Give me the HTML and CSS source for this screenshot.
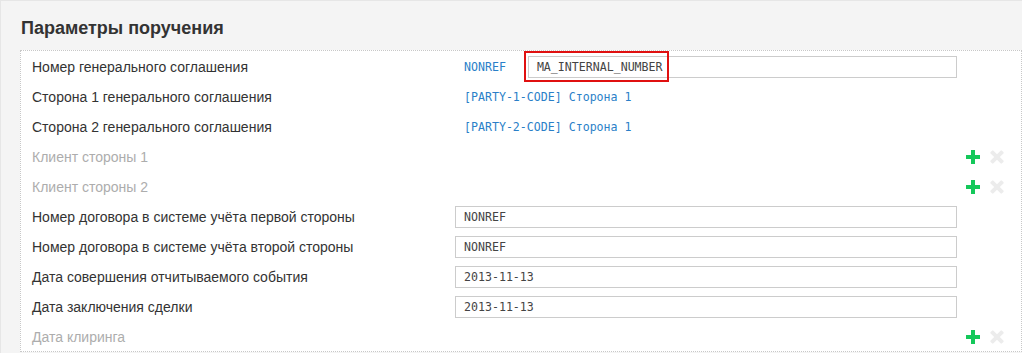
FILE: index.html
```html
<!DOCTYPE html>
<html>
<head>
<meta charset="utf-8">
<link rel="stylesheet" href="styles.css">
</head>
<body>
<div class="panel">
  <h2 class="title">Параметры поручения</h2>
  <div class="box">
    <div class="row">
      <div class="label">Номер генерального соглашения</div>
      <div class="value">
        <span class="code">NONREF</span>
        <span class="field field-wide highlight"><span class="field-text">MA_INTERNAL_NUMBER</span></span>
      </div>
      <div class="actions"></div>
    </div>
    <div class="row">
      <div class="label">Сторона 1 генерального соглашения</div>
      <div class="value"><span class="code">[PARTY-1-CODE] Сторона 1</span></div>
      <div class="actions"></div>
    </div>
    <div class="row">
      <div class="label">Сторона 2 генерального соглашения</div>
      <div class="value"><span class="code">[PARTY-2-CODE] Сторона 1</span></div>
      <div class="actions"></div>
    </div>
    <div class="row">
      <div class="label muted">Клиент стороны 1</div>
      <div class="value"></div>
      <div class="actions"><span class="plus"></span><span class="cross"></span></div>
    </div>
    <div class="row">
      <div class="label muted">Клиент стороны 2</div>
      <div class="value"></div>
      <div class="actions"><span class="plus"></span><span class="cross"></span></div>
    </div>
    <div class="row">
      <div class="label">Номер договора в системе учёта первой стороны</div>
      <div class="value"><span class="field"><span class="field-text">NONREF</span></span></div>
      <div class="actions"></div>
    </div>
    <div class="row">
      <div class="label">Номер договора в системе учёта второй стороны</div>
      <div class="value"><span class="field"><span class="field-text">NONREF</span></span></div>
      <div class="actions"></div>
    </div>
    <div class="row">
      <div class="label">Дата совершения отчитываемого события</div>
      <div class="value"><span class="field"><span class="field-text">2013-11-13</span></span></div>
      <div class="actions"></div>
    </div>
    <div class="row">
      <div class="label">Дата заключения сделки</div>
      <div class="value"><span class="field"><span class="field-text">2013-11-13</span></span></div>
      <div class="actions"></div>
    </div>
    <div class="row">
      <div class="label muted">Дата клиринга</div>
      <div class="value"></div>
      <div class="actions"><span class="plus"></span><span class="cross"></span></div>
    </div>
  </div>
</div>
</body>
</html>
```

FILE: styles.css
```css
html, body {
  margin: 0;
  padding: 0;
  background: #ffffff;
  overflow: hidden;
}
.panel {
  box-sizing: border-box;
  background: #f4f4f4;
  border-left: 1px solid #e6e6e6;
  border-top: 1px solid #e6e6e6;
  padding: 0 0 0 19px;
  width: 1022px;
  height: 353px;
  font-family: "Liberation Sans", Arial, sans-serif;
}
.title {
  margin: 0;
  padding: 17px 0 11px 1px;
  font-size: 18px;
  line-height: 21px;
  font-weight: bold;
  color: #333333;
}
.box {
  width: 1000px;
  background: #ffffff;
  border: 1px dotted #c8c8c8;
}
.row {
  box-sizing: border-box;
  display: flex;
  align-items: center;
  height: 30px;
  padding-top: 2px;
}
.label {
  width: 423px;
  padding-left: 11px;
  font-size: 14px;
  color: #333333;
  white-space: nowrap;
}
.label.muted {
  color: #adadad;
}
.value {
  width: 502px;
  display: flex;
  align-items: center;
}
.code {
  font-family: "DejaVu Sans Mono", "Liberation Mono", monospace;
  font-size: 11.6px;
  color: #2a7fc8;
  padding-left: 9px;
  white-space: nowrap;
}
.field {
  box-sizing: border-box;
  flex: 1;
  height: 22px;
  border: 1px solid #cccccc;
  display: flex;
  align-items: center;
  padding-left: 8px;
}
.field-wide {
  margin-left: 22px;
}
.highlight {
  position: relative;
}
.highlight::after {
  content: "";
  position: absolute;
  left: -5px;
  top: -6px;
  width: 141px;
  height: 27px;
  border: 2px solid #e01010;
}
.field-text {
  font-family: "DejaVu Sans Mono", "Liberation Mono", monospace;
  font-size: 11.6px;
  color: #444444;
  white-space: nowrap;
}
.actions {
  display: flex;
  align-items: center;
  gap: 10px;
  padding-left: 9px;
}
.plus, .cross {
  position: relative;
  width: 14px;
  height: 14px;
  display: inline-block;
}
.plus::before, .plus::after {
  content: "";
  position: absolute;
  background: #14c85a;
}
.plus::before {
  left: 5px;
  top: 0;
  width: 4px;
  height: 14px;
}
.plus::after {
  left: 0;
  top: 5px;
  width: 14px;
  height: 4px;
}
.cross::before, .cross::after {
  content: "";
  position: absolute;
  left: 5px;
  top: -1px;
  width: 4px;
  height: 16px;
  background: #ececec;
  border-radius: 1px;
}
.cross::before {
  transform: rotate(45deg);
}
.cross::after {
  transform: rotate(-45deg);
}
```
